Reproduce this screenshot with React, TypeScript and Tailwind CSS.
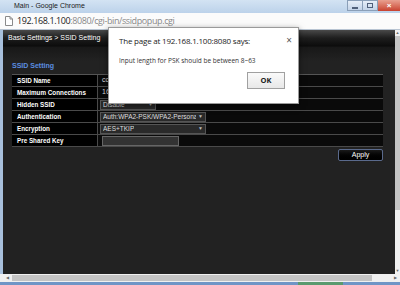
import { FC } from "react";

const rows: Array<{ label: string; kind: "text" | "select" | "input"; value?: string; width?: number }> = [
  { label: "SSID Name", kind: "text", value: "cc" },
  { label: "Maximum Connections", kind: "text", value: "16" },
  { label: "Hidden SSID", kind: "select", value: "Disable", width: 56 },
  { label: "Authentication", kind: "select", value: "Auth:WPA2-PSK/WPA2-Personal", width: 106 },
  { label: "Encryption", kind: "select", value: "AES+TKIP", width: 106 },
  { label: "Pre Shared Key", kind: "input", width: 77 },
];

const TitleBar: FC = () => (
  <div className="flex h-[13px] items-center bg-gradient-to-b from-[#d3e3f3] to-[#bcd2ea] pl-[14px] text-[7px] text-[#1a1a1a]">
    <span className="flex-1">Main - Google Chrome</span>
    <div className="flex h-full items-start">
      <div className="flex h-[11px] w-[16px] items-center justify-center border border-[#8a9fb8] bg-gradient-to-b from-[#e6eef8] to-[#c4d4e8]">
        <div className="mt-[4px] h-[2px] w-[6px] bg-[#50607a]" />
      </div>
      <div className="flex h-[11px] w-[15px] items-center justify-center border border-l-0 border-[#8a9fb8] bg-gradient-to-b from-[#e6eef8] to-[#c4d4e8]">
        <div className="h-[5px] w-[6px] border border-[#50607a]" />
      </div>
      <div className="flex h-[11px] w-[22px] items-center justify-center bg-gradient-to-b from-[#e8a090] to-[#c8402e] text-[8px] font-bold text-white">
        ×
      </div>
    </div>
  </div>
);

const AddressBar: FC = () => (
  <div className="flex h-[17px] items-center border-b border-[#b8c4d2] bg-[#fbfbfb] pl-[5px] font-['Open_Sans',sans-serif] text-[9px] tracking-[-0.4px]">
    <svg width="8" height="10" viewBox="0 0 8 10" className="mr-[4px]">
      <path d="M0.5 0.5h4.5l2.5 2.5v6.5h-7z" fill="#fff" stroke="#8a8a8a" />
      <path d="M5 0.5v2.5h2.5" fill="none" stroke="#8a8a8a" />
    </svg>
    <span className="text-[#222]">192.168.1.100</span>
    <span className="text-[#8a8a8a]">:8080/cgi-bin/ssidpopup.cgi</span>
  </div>
);

const Dialog: FC = () => (
  <div className="absolute left-[108px] top-[27px] h-[77px] w-[191px] border border-[#9a9a9a] bg-white font-['Open_Sans',sans-serif] shadow-[0_2px_6px_rgba(0,0,0,0.5)]">
    <div className="flex items-start justify-between pl-[10px] pr-[6px] pt-[7px]">
      <span className="whitespace-nowrap text-[8px] leading-[12px] tracking-[-0.2px] text-[#222]">The page at 192.168.1.100:8080 says:</span>
      <span className="text-[10px] leading-[10px] text-[#555]">×</span>
    </div>
    <div className="mt-[9px] whitespace-nowrap pl-[10px] text-[6.5px] text-[#333]">Input length for PSK should be between 8~63</div>
    <div className="mt-[6px] flex justify-end pr-[13px]">
      <div className="flex h-[17px] w-[38px] items-center justify-center border border-[#a0a0a0] bg-gradient-to-b from-[#fafafa] to-[#e8e8e8] text-[7.5px] font-bold text-[#222]">
        OK
      </div>
    </div>
  </div>
);

export default function App() {
  return (
    <div className="relative flex h-[285px] w-[400px] flex-col overflow-hidden bg-[#c8d8ea] font-['Liberation_Sans',Arial,sans-serif]">
      <TitleBar />
      <AddressBar />
      <div className="flex flex-1">
        <div className="w-[3px] bg-[#a8c0dc]" />
        <div className="flex flex-1 flex-col bg-[#222222]">
          <div className="flex h-[17px] items-center border-b border-[#111] bg-gradient-to-b from-[#4a4a4a] via-[#1e1e1e] to-[#0c0c0c] pl-[5px] text-[7px] text-white">
            Basic Settings &gt; SSID Setting
          </div>
          <div className="h-[14px] bg-gradient-to-b from-[#181818] to-[#222]" />
          <div className="pl-[9px] pr-[12px]">
            <div className="h-[10px] text-[7px] font-bold leading-[10px] text-[#5b8ee0]">SSID Setting</div>
            <div className="mt-[3px] border-t border-[#555]">
              {rows.map((r) => (
                <div key={r.label} className="flex h-[12px] border-b border-[#4a4a4a]">
                  <div className="flex w-[86px] items-center border-r border-[#4a4a4a] bg-black pl-[5px] text-[6.3px] font-bold text-white">
                    {r.label}
                  </div>
                  <div className="flex flex-1 items-center bg-[#0a0a0a] pl-[2px]">
                    {r.kind === "text" && (
                      <span className="pl-[2px] text-[7px] text-[#ddd]">{r.value}</span>
                    )}
                    {r.kind === "select" && (
                      <div
                        className="flex h-[10px] items-center justify-between border border-[#555] bg-[#2a2a2a] px-[2px] text-[6.5px] text-[#ddd]"
                        style={{ width: r.width }}
                      >
                        <span className="overflow-hidden whitespace-nowrap">{r.value}</span>
                        <span className="pl-[2px] text-[5px] text-[#bbb]">▼</span>
                      </div>
                    )}
                    {r.kind === "input" && (
                      <div
                        className="ml-[2px] h-[10px] border border-[#666] bg-[#333]"
                        style={{ width: r.width }}
                      />
                    )}
                  </div>
                </div>
              ))}
            </div>
            <div className="mt-[2px] flex justify-end">
              <div className="flex h-[12px] w-[45px] items-center justify-center rounded-[2px] border border-[#5a6a8c] bg-gradient-to-b from-[#1a1a1a] to-black text-[7px] text-white">
                Apply
              </div>
            </div>
          </div>
        </div>
        <div className="flex w-[5px] flex-col bg-[#f0f0f0]">
          <div className="h-[6px] text-center text-[4px] leading-[6px] text-[#666]">▲</div>
          <div className="h-[174px] bg-[#c4c4c4]" />
          <div className="flex-1" />
          <div className="h-[6px] text-center text-[4px] leading-[6px] text-[#666]">▼</div>
        </div>
      </div>
      <div className="flex h-[8px] items-center bg-[#f0f0f0] pl-[3px]">
        <div className="w-[9px] text-center text-[4px] text-[#666]">◀</div>
        <div className="h-[6px] w-[360px] bg-[#c4c4c4]" />
        <div className="flex-1" />
        <div className="w-[9px] text-center text-[4px] text-[#666]">▶</div>
      </div>
      <div className="flex h-[3px] bg-[#6f95c6]">
        <div className="ml-[298px] w-[45px] bg-[#5a9a6e]" />
      </div>
      <Dialog />
    </div>
  );
}
